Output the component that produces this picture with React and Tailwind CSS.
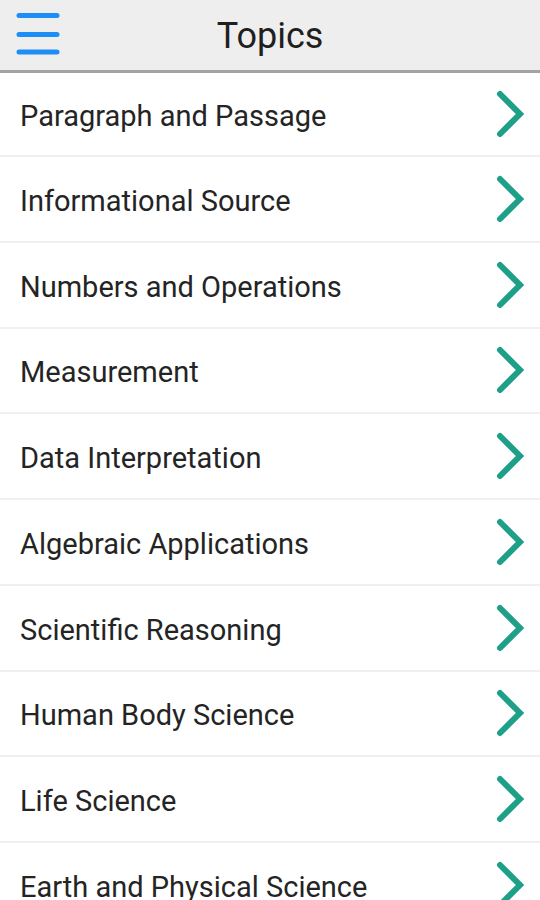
import React from "react";

const topics = [
  "Paragraph and Passage",
  "Informational Source",
  "Numbers and Operations",
  "Measurement",
  "Data Interpretation",
  "Algebraic Applications",
  "Scientific Reasoning",
  "Human Body Science",
  "Life Science",
  "Earth and Physical Science",
];

function Chevron() {
  return (
    <svg width="34" height="48" viewBox="0 0 34 48" className="shrink-0">
      <polyline
        points="7,4 27,24 7,44"
        fill="none"
        stroke="#1d9f88"
        strokeWidth="6"
        strokeLinecap="round"
        strokeLinejoin="miter"
      />
    </svg>
  );
}

export default function App() {
  return (
    <div
      className="w-[540px] h-[900px] overflow-hidden bg-white"
      style={{ fontFamily: "Roboto, 'Noto Sans', sans-serif" }}
    >
      <div className="relative h-[73px] bg-[#eeeeee] border-b-[3px] border-[#a3a3a3] flex items-center justify-center">
        <svg
          width="44"
          height="46"
          viewBox="0 0 44 46"
          className="absolute left-[16px] top-[10px]"
        >
          <line x1="3" y1="5.5" x2="41" y2="5.5" stroke="#1c8ef5" strokeWidth="5" strokeLinecap="round" />
          <line x1="3" y1="24.5" x2="41" y2="24.5" stroke="#1c8ef5" strokeWidth="5" strokeLinecap="round" />
          <line x1="3" y1="42" x2="41" y2="42" stroke="#1c8ef5" strokeWidth="5" strokeLinecap="round" />
        </svg>
        <span className="text-[36px] text-[#1f1f1f] leading-none mt-[2px]">Topics</span>
      </div>
      <div className="flex flex-col">
        {topics.map((t, i) => (
          <div
            key={t}
            className={
              (i === 0 ? "h-[84px] " : "h-[85.75px] ") +
              "flex items-center justify-between pl-[20px] pr-[13px] border-b-2 border-[#f0f0f0] shrink-0"
            }
          >
            <span className="text-[29px] text-[#242424] leading-none mt-[5px]">{t}</span>
            <Chevron />
          </div>
        ))}
      </div>
    </div>
  );
}
